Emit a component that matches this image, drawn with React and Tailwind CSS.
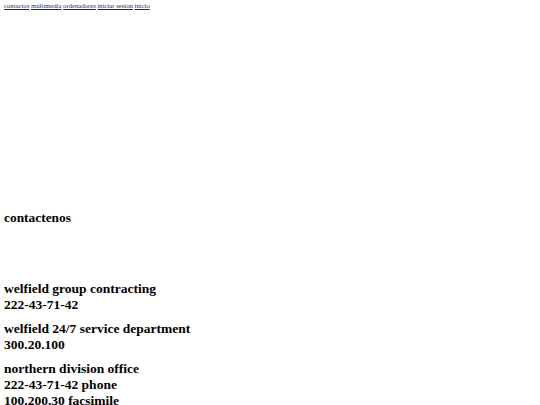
export default function App() {
  const links = ["contactos", "múltimedia", "ordenadores", "iniciar sesion", "inicio"];
  return (
    <div className="bg-white text-black px-[4px] min-h-[405px]" style={{ fontFamily: '"Liberation Serif", serif' }}>
      <div className="pt-[1px] text-[6.7px] leading-[10px]">
        {links.map((l, i) => (
          <span key={l}>
            <a href="#" className="text-[#1a1aa6] underline">{l}</a>
            {i < links.length - 1 ? " " : ""}
          </span>
        ))}
      </div>
      <h2 className="mt-[199px] text-[13.4px] leading-[15px] font-bold">contactenos</h2>
      <div className="mt-[56px] text-[13.5px] leading-[16px] font-bold flex flex-col gap-[8px]">
        <div>
          <div>welfield group contracting</div>
          <div>222-43-71-42</div>
        </div>
        <div>
          <div>welfield 24/7 service department</div>
          <div>300.20.100</div>
        </div>
        <div>
          <div>northern division office</div>
          <div>222-43-71-42 phone</div>
          <div>100.200.30 facsimile</div>
        </div>
      </div>
    </div>
  );
}
